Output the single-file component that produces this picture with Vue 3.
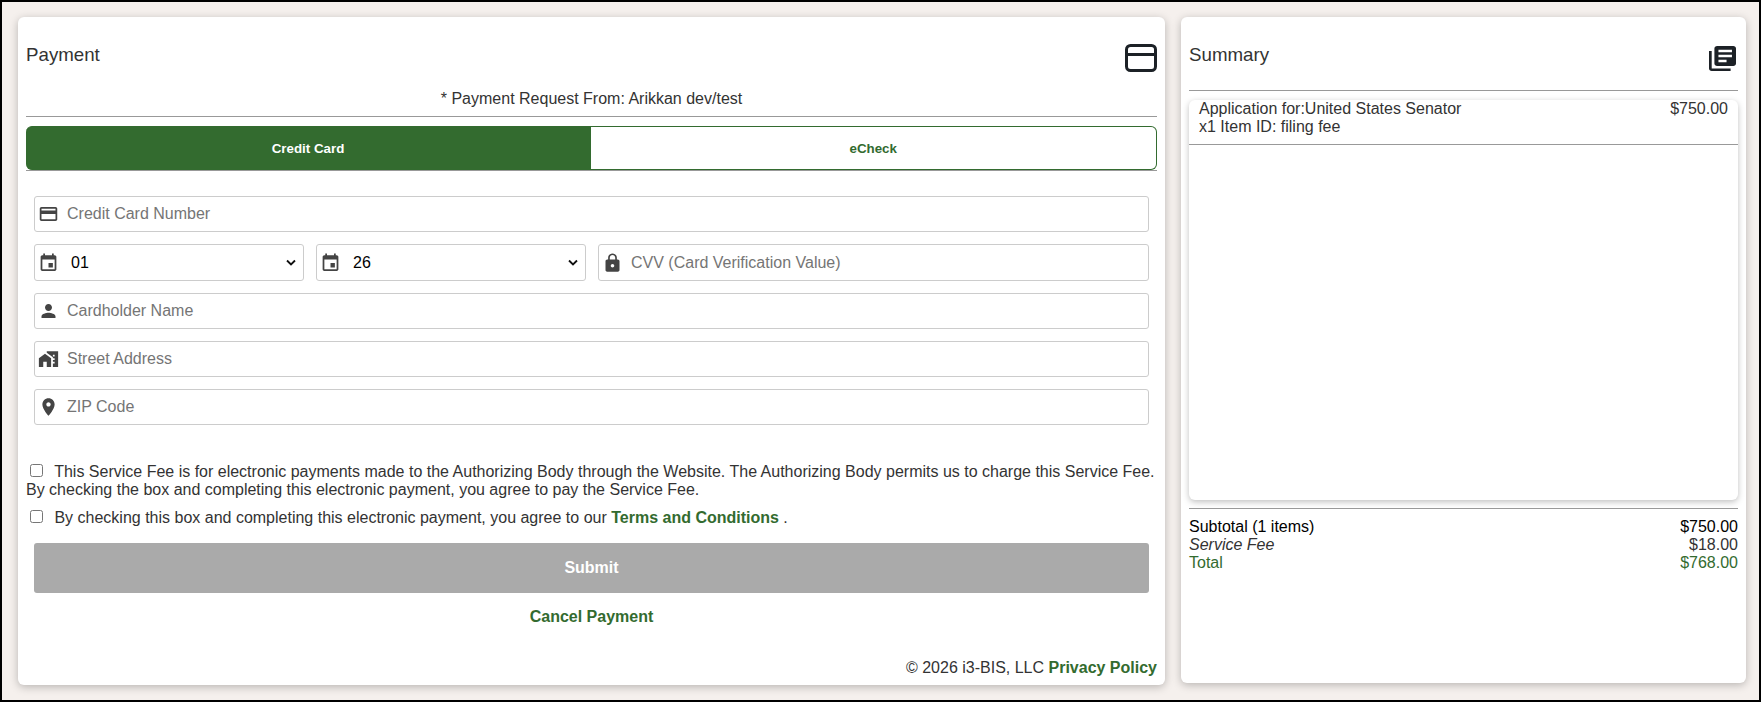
<script setup>
import { ref } from 'vue';

const icons = {
  card: 'M20 4H4c-1.11 0-1.99.89-1.99 2L2 18c0 1.11.89 2 2 2h16c1.11 0 2-.89 2-2V6c0-1.11-.89-2-2-2zm0 14H4v-6h16v6zm0-10H4V6h16v2z',
  event: 'M17 12h-5v5h5v-5zM16 1v2H8V1H6v2H5c-1.11 0-1.99.9-1.99 2L3 19c0 1.1.89 2 2 2h14c1.1 0 2-.9 2-2V5c0-1.1-.9-2-2-2h-1V1h-2zm3 18H5V8h14v11z',
  lock: 'M18 8h-1V6c0-2.76-2.24-5-5-5S7 3.24 7 6v2H6c-1.1 0-2 .9-2 2v10c0 1.1.9 2 2 2h12c1.1 0 2-.9 2-2V10c0-1.1-.9-2-2-2zm-6 9c-1.1 0-2-.9-2-2s.9-2 2-2 2 .9 2 2-.9 2-2 2zm3.1-9H8.9V6c0-1.71 1.39-3.1 3.1-3.1 1.71 0 3.1 1.39 3.1 3.1v2z',
  person: 'M12 12c2.21 0 4-1.79 4-4s-1.79-4-4-4-4 1.79-4 4 1.79 4 4 4zm0 2c-2.67 0-8 1.34-8 4v2h16v-2c0-2.66-5.33-4-8-4z',
  home: 'M1 11v10h5v-6h4v6h5V11L8 6zM10 3v1.97l7 5V11h2v2h-2v2h2v2h-2v4h6V3H10zm9 6h-2V7h2v2z',
  place: 'M12 2C8.13 2 5 5.13 5 9c0 5.25 7 13 7 13s7-7.75 7-13c0-3.87-3.13-7-7-7zm0 9.5c-1.38 0-2.5-1.12-2.5-2.5s1.12-2.5 2.5-2.5 2.5 1.12 2.5 2.5-1.12 2.5-2.5 2.5z'
};

const month = ref('01');
const year = ref('26');
const months = ['01', '02', '03', '04', '05', '06', '07', '08', '09', '10', '11', '12'];
const years = ['26', '27', '28', '29', '30'];
const addressFields = [
  { id: 'name', icon: icons.person, placeholder: 'Cardholder Name' },
  { id: 'street', icon: icons.home, placeholder: 'Street Address' },
  { id: 'zip', icon: icons.place, placeholder: 'ZIP Code' }
];
</script>

<template>
  <div class="page">
    <section class="card payment">
      <header class="card-head">
        <h3>Payment</h3>
        <svg class="head-card" viewBox="0 0 32 28" fill="none" stroke="#1c2126" stroke-width="3">
          <rect x="1.5" y="1.5" width="29" height="25" rx="4" />
          <path d="M1.5 10.5h29" />
        </svg>
      </header>
      <p class="request">* Payment Request From: Arikkan dev/test</p>
      <hr />
      <div class="tabs">
        <button class="tab active">Credit Card</button>
        <button class="tab">eCheck</button>
      </div>

      <form class="form" @submit.prevent>
        <div class="field">
          <svg class="field-icon" viewBox="0 0 24 24"><path :d="icons.card" /></svg>
          <input type="text" placeholder="Credit Card Number" />
        </div>
        <div class="field-row">
          <div class="field select-field">
            <svg class="field-icon" viewBox="0 0 24 24"><path :d="icons.event" /></svg>
            <select v-model="month">
              <option v-for="m in months" :key="m">{{ m }}</option>
            </select>
            <svg class="chevron" viewBox="0 0 10 7" fill="none" stroke="#111" stroke-width="1.8"><path d="M1 1l4 4 4-4" /></svg>
          </div>
          <div class="field select-field">
            <svg class="field-icon" viewBox="0 0 24 24"><path :d="icons.event" /></svg>
            <select v-model="year">
              <option v-for="y in years" :key="y">{{ y }}</option>
            </select>
            <svg class="chevron" viewBox="0 0 10 7" fill="none" stroke="#111" stroke-width="1.8"><path d="M1 1l4 4 4-4" /></svg>
          </div>
          <div class="field cvv-field">
            <svg class="field-icon" viewBox="0 0 24 24"><path :d="icons.lock" /></svg>
            <input type="text" placeholder="CVV (Card Verification Value)" />
          </div>
        </div>
        <div v-for="f in addressFields" :key="f.id" class="field">
          <svg class="field-icon" viewBox="0 0 24 24"><path :d="f.icon" /></svg>
          <input type="text" :placeholder="f.placeholder" />
        </div>
      </form>

      <div class="consent">
        <p class="fee-text">
          <input type="checkbox" />
          This Service Fee is for electronic payments made to the Authorizing Body through the Website. The Authorizing Body permits us to charge this Service Fee. By checking the box and completing this electronic payment, you agree to pay the Service Fee.
        </p>
        <p class="terms-text">
          <input type="checkbox" />
          By checking this box and completing this electronic payment, you agree to our
          <a href="#" class="link">Terms and Conditions</a>
          .
        </p>
      </div>

      <div class="actions">
        <button class="submit" disabled>Submit</button>
        <a href="#" class="link cancel">Cancel Payment</a>
      </div>

      <footer class="foot">© 2026 i3-BIS, LLC <a href="#" class="link">Privacy Policy</a></footer>
    </section>

    <aside class="card summary">
      <header class="card-head">
        <h3>Summary</h3>
        <svg class="head-books" viewBox="2 2 20 20" preserveAspectRatio="none" fill="#1c2126">
          <path d="M4 6H2v14c0 1.1.9 2 2 2h14v-2H4V6zm16-4H8c-1.1 0-2 .9-2 2v12c0 1.1.9 2 2 2h12c1.1 0 2-.9 2-2V4c0-1.1-.9-2-2-2zm-1 9H9V9h10v2zm-4 4H9v-2h6v2zm4-8H9V5h10v2z" />
        </svg>
      </header>
      <hr class="summary-rule" />
      <div class="items">
        <div class="item">
          <div>
            <div>Application for:United States Senator</div>
            <div>x1 Item ID: filing fee</div>
          </div>
          <div>$750.00</div>
        </div>
      </div>
      <hr class="totals-rule" />
      <div class="totals">
        <div class="line subtotal"><span>Subtotal (1 items)</span><span>$750.00</span></div>
        <div class="line fee"><em>Service Fee</em><span>$18.00</span></div>
        <div class="line total"><span>Total</span><span>$768.00</span></div>
      </div>
    </aside>
  </div>
</template>

<style>
body {
  margin: 0;
  background: #f5f0ed;
}
</style>

<style scoped>
.page {
  box-sizing: border-box;
  width: 1761px;
  height: 702px;
  border: 2px solid #000;
  background: #f5f0ed;
  padding: 15px 13px 0 16px;
  display: flex;
  align-items: flex-start;
  gap: 16px;
  font-family: "Liberation Sans", Arial, sans-serif;
  font-size: 16px;
  line-height: 18px;
  color: #333;
  overflow: hidden;
}

.card {
  box-sizing: border-box;
  flex: none;
  background: #fff;
  border-radius: 6px;
  box-shadow: 0 2px 8px rgba(0, 0, 0, 0.25);
  padding: 0 8px;
}
.payment {
  width: 1147px;
  height: 668px;
}
.summary {
  width: 565px;
  height: 666px;
}

.card-head {
  display: flex;
  justify-content: space-between;
  align-items: center;
  height: 28px;
  padding-top: 27px;
}
.card-head h3 {
  margin: -6px 0 0;
  font-size: 18.72px;
  font-weight: 400;
  line-height: 22px;
}
.head-card {
  width: 32px;
  height: 28px;
}
.head-books {
  width: 27px;
  height: 25px;
  margin-right: 2px;
}

.request {
  margin: 18px 0 0;
  text-align: center;
}
hr {
  border: 0;
  border-top: 1px solid #999;
  margin: 0;
}
.payment hr {
  margin-top: 8px;
}

.tabs {
  display: flex;
  margin-top: 9px;
  height: 44px;
  border-bottom: 1px solid #999;
}
.tab {
  flex: 0 0 50%;
  border: 1px solid #336b2f;
  background: #fff;
  color: #336b2f;
  font: 700 13.333px "Liberation Sans", Arial, sans-serif;
  border-radius: 0 6px 6px 0;
  border-left: 0;
}
.tab.active {
  flex-basis: 565px;
  background: #336b2f;
  color: #fff;
  border-radius: 6px 0 0 6px;
}

.form {
  display: flex;
  flex-direction: column;
  gap: 12px;
  margin: 25px 8px 0;
}
.field {
  position: relative;
  display: flex;
}
.field-row {
  display: flex;
  gap: 12px;
}
.select-field {
  width: 270px;
  flex: none;
}
.cvv-field {
  flex: 1;
}
.field input,
.field select {
  box-sizing: border-box;
  width: 100%;
  height: 36px;
  border: 1px solid #ccc;
  border-radius: 3px;
  background: #fff;
  padding: 0 8px 0 32px;
  font: 16px "Liberation Sans", Arial, sans-serif;
  color: #333;
  outline: none;
}
.field input::placeholder {
  color: #757575;
  opacity: 1;
}
.field select,
.cvv-field input {
  height: 37px;
}
.field select {
  appearance: none;
  padding-left: 36px;
  color: #000;
}
.field-icon {
  position: absolute;
  left: 4px;
  top: 50%;
  width: 21px;
  height: 21px;
  transform: translateY(-50%);
  fill: #444;
  pointer-events: none;
}
.chevron {
  position: absolute;
  right: 8px;
  top: 50%;
  width: 10px;
  height: 7px;
  transform: translateY(-50%);
  pointer-events: none;
}

.consent {
  margin-top: 38px;
}
.consent p {
  margin: 0;
}
.terms-text {
  padding-top: 10px;
}
.consent input {
  width: 13px;
  height: 13px;
  margin: 0 7px 0 4px;
  vertical-align: 0;
}
.link {
  color: #336b2f;
  font-weight: 700;
  text-decoration: none;
}

.actions {
  display: flex;
  flex-direction: column;
  align-items: center;
  margin: 16px 8px 0;
}
.submit {
  width: 100%;
  height: 50px;
  border: 0;
  border-radius: 3px;
  background: #aaa;
  color: #fff;
  font: 700 16px "Liberation Sans", Arial, sans-serif;
}
.cancel {
  margin-top: 15px;
}
.foot {
  margin-top: 33px;
  text-align: right;
}

.summary-rule {
  margin-top: 18px;
}
.items {
  height: 400px;
  margin-top: 9px;
  border-radius: 6px;
  background: #fff;
  box-shadow: 0 2px 6px rgba(0, 0, 0, 0.25);
}
.item {
  display: flex;
  justify-content: space-between;
  padding: 0 10px 8px;
  border-bottom: 1px solid #999;
}
.totals-rule {
  margin-top: 8px;
}
.totals {
  margin-top: 9px;
}
.line {
  display: flex;
  justify-content: space-between;
}
.subtotal {
  color: #000;
}
.total {
  color: #336b2f;
}
</style>
